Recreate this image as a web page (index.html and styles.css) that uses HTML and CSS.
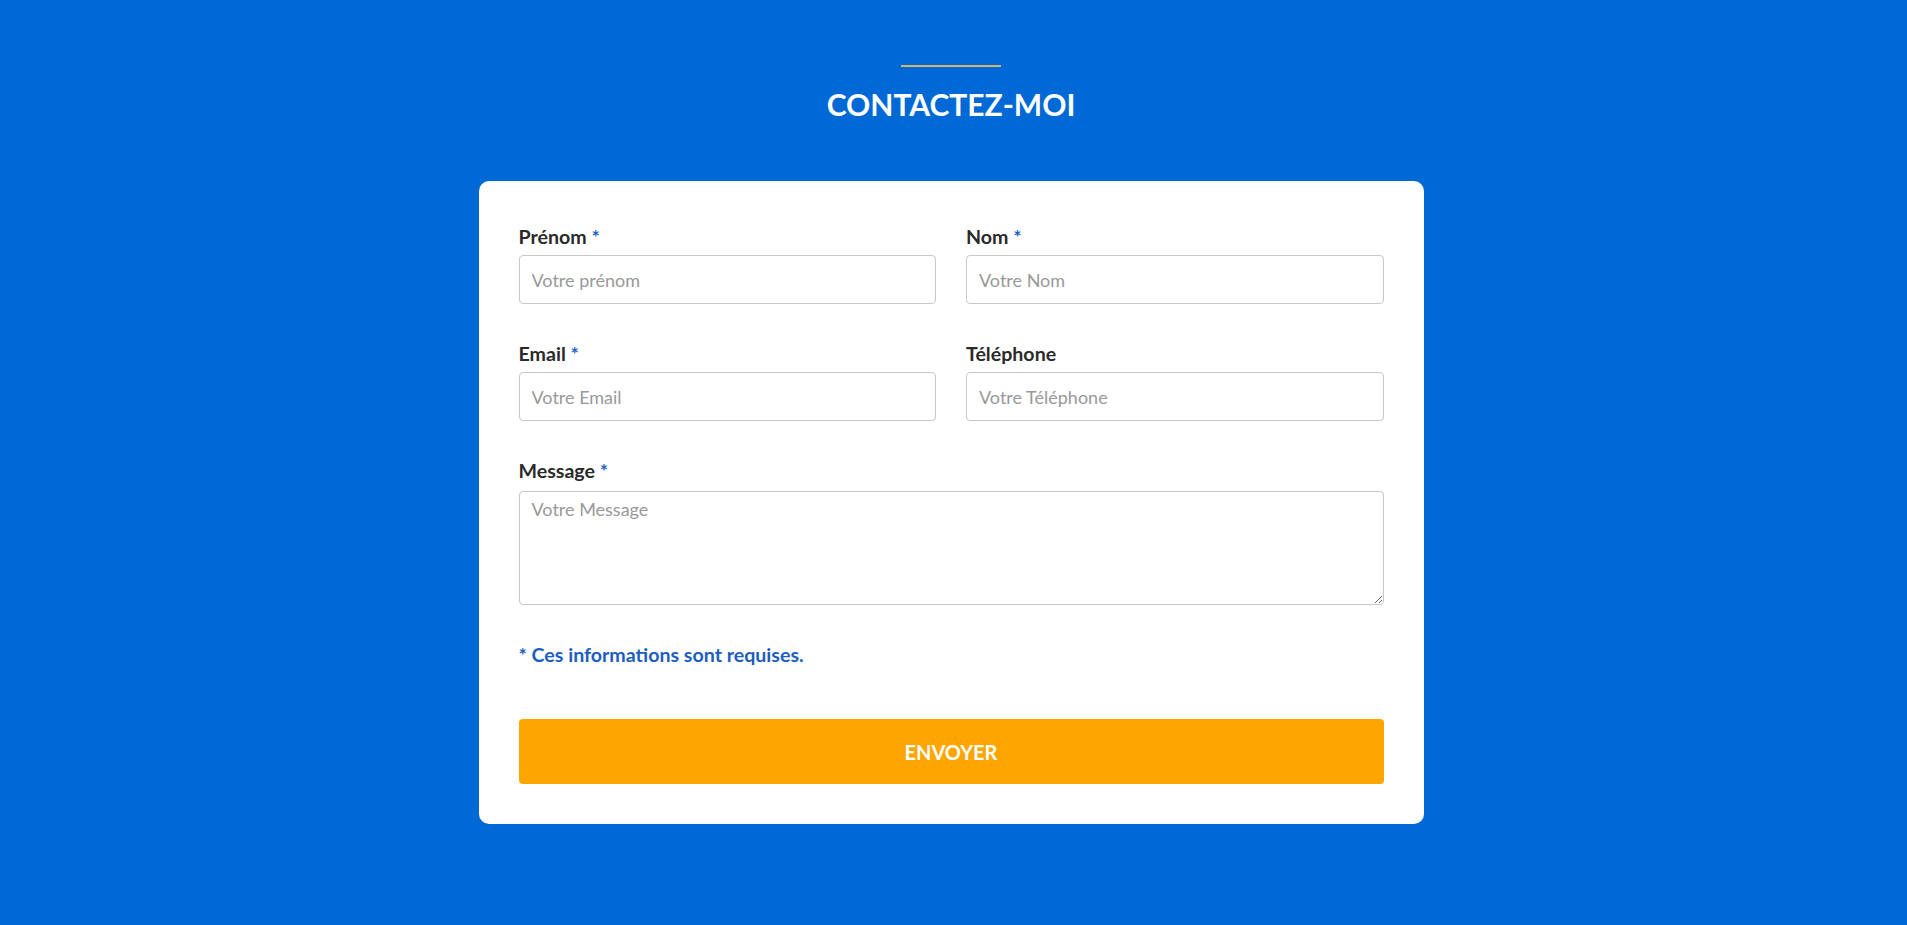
FILE: index.html
```html
<!DOCTYPE html>
<html lang="fr">
<head>
<meta charset="utf-8">
<title>Contactez-moi</title>
<link rel="stylesheet" href="styles.css">
</head>
<body>
<section class="contact">
  <header class="contact-head">
    <span class="accent-line"></span>
    <h2 class="contact-title">CONTACTEZ-MOI</h2>
  </header>
  <form class="card">
    <div class="row two">
      <div class="field">
        <label class="label" for="prenom">Prénom <span class="req">*</span></label>
        <input class="input" id="prenom" type="text" placeholder="Votre prénom">
      </div>
      <div class="field">
        <label class="label" for="nom">Nom <span class="req">*</span></label>
        <input class="input" id="nom" type="text" placeholder="Votre Nom">
      </div>
    </div>
    <div class="row two">
      <div class="field">
        <label class="label" for="email">Email <span class="req">*</span></label>
        <input class="input" id="email" type="email" placeholder="Votre Email">
      </div>
      <div class="field">
        <label class="label" for="tel">Téléphone</label>
        <input class="input" id="tel" type="tel" placeholder="Votre Téléphone">
      </div>
    </div>
    <div class="row">
      <div class="field">
        <label class="label" for="msg">Message <span class="req">*</span></label>
        <textarea class="input textarea" id="msg" placeholder="Votre Message"></textarea>
      </div>
    </div>
    <p class="note">* Ces informations sont requises.</p>
    <button class="submit" type="button">ENVOYER</button>
  </form>
</section>
</body>
</html>
```

FILE: styles.css
```css
* { box-sizing: border-box; }
html, body { margin: 0; padding: 0; }
body {
  background: #0069d6;
  font-family: Lato, "Open Sans", Arial, sans-serif;
  min-height: 925px;
}
.contact {
  display: flex;
  flex-direction: column;
  align-items: center;
  padding-top: 65px;
  padding-right: 5px;
}
.contact-head {
  display: flex;
  flex-direction: column;
  align-items: center;
}
.accent-line {
  display: block;
  width: 100px;
  height: 2px;
  background: #d2b468;
}
.contact-title {
  margin: 19px 0 0;
  color: #fff;
  font-size: 30px;
  line-height: 36px;
  font-weight: 700;
}
.card {
  margin-top: 59px;
  width: 945px;
  background: #fff;
  border-radius: 10px;
  padding: 41px 40px 40px;
  display: flex;
  flex-direction: column;
}
.row {
  display: grid;
  grid-template-columns: 1fr;
  column-gap: 30px;
  margin-bottom: 35px;
}
.row.two { grid-template-columns: 1fr 1fr; }
.row:last-of-type { margin-bottom: 0; }
.field {
  display: flex;
  flex-direction: column;
  gap: 3px;
}
.label {
  font-size: 19.6px;
  line-height: 30px;
  font-weight: 700;
  color: #2a2a2a;
}
.req { color: #1a64c8; }
.input {
  height: 49px;
  border: 1px solid #c8c8c8;
  border-radius: 4px;
  padding: 0 12px;
  font-family: inherit;
  font-size: 18px;
  color: #333;
  background: #fff;
}
.input::placeholder { color: #999; }
.textarea {
  height: 114px;
  padding: 7px 12px;
  line-height: 1.2;
  resize: vertical;
  margin-top: 2px;
}
.note {
  margin: 35px 0 0;
  font-size: 19.6px;
  line-height: 30px;
  font-weight: 700;
  color: #1c5ec0;
}
.submit {
  margin-top: 49px;
  height: 65px;
  border: 0;
  border-radius: 4px;
  background: #ffa500;
  color: #fff;
  font-family: inherit;
  font-size: 20px;
  font-weight: 700;
  cursor: pointer;
}
```
